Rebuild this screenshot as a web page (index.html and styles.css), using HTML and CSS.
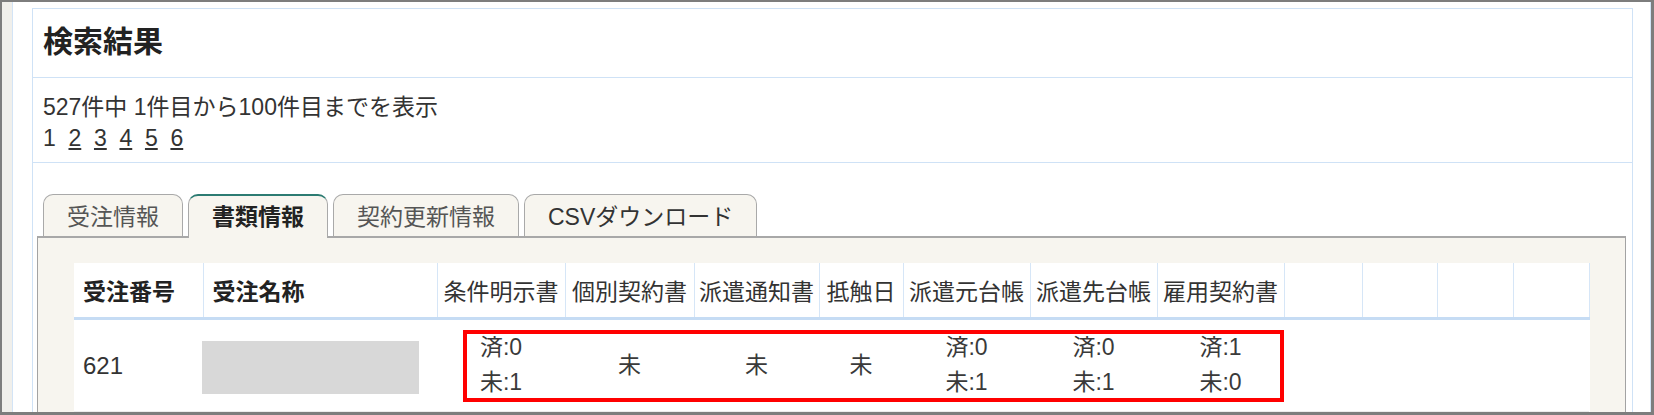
FILE: index.html
```html
<!DOCTYPE html>
<html lang="ja">
<head>
<meta charset="utf-8">
<title>検索結果</title>
<link rel="stylesheet" href="styles.css">
</head>
<body>
<div class="frame">
  <div class="side"></div>
  <div class="main">
    <div class="panel">
      <div class="panel-head">
        <h2 class="title">検索結果</h2>
      </div>
      <div class="summary">
        <div class="summary-line">527件中 1件目から100件目までを表示</div>
        <div class="pager">
          <span class="page current">1</span>
          <a class="page" href="#">2</a>
          <a class="page" href="#">3</a>
          <a class="page" href="#">4</a>
          <a class="page" href="#">5</a>
          <a class="page" href="#">6</a>
        </div>
      </div>
      <div class="tabs-wrap">
        <div class="tabs">
          <div class="tab">受注情報</div>
          <div class="tab active">書類情報</div>
          <div class="tab">契約更新情報</div>
          <div class="tab">CSVダウンロード</div>
        </div>
        <div class="tab-panel">
          <div class="table-wrap">
            <table class="grid">
              <colgroup>
                <col style="width:129px">
                <col style="width:234px">
                <col style="width:128px">
                <col style="width:129px">
                <col style="width:125px">
                <col style="width:84px">
                <col style="width:127px">
                <col style="width:127px">
                <col style="width:127px">
                <col style="width:78px">
                <col style="width:75px">
                <col style="width:76px">
                <col style="width:76px">
              </colgroup>
              <thead>
                <tr>
                  <th class="h-left h-bold">受注番号</th>
                  <th class="h-left h-bold">受注名称</th>
                  <th>条件明示書</th>
                  <th>個別契約書</th>
                  <th>派遣通知書</th>
                  <th>抵触日</th>
                  <th>派遣元台帳</th>
                  <th>派遣先台帳</th>
                  <th>雇用契約書</th>
                  <th></th>
                  <th></th>
                  <th></th>
                  <th></th>
                </tr>
              </thead>
              <tbody>
                <tr>
                  <td class="c-left">621</td>
                  <td class="c-name"><div class="masked"></div></td>
                  <td>済:0<br>未:1</td>
                  <td>未</td>
                  <td>未</td>
                  <td>未</td>
                  <td>済:0<br>未:1</td>
                  <td>済:0<br>未:1</td>
                  <td>済:1<br>未:0</td>
                  <td></td>
                  <td></td>
                  <td></td>
                  <td></td>
                </tr>
              </tbody>
            </table>
            <div class="highlight"></div>
          </div>
        </div>
      </div>
    </div>
  </div>
</div>
</body>
</html>
```

FILE: styles.css
```css
* { box-sizing: border-box; }

html, body {
  margin: 0;
  padding: 0;
  background: #ffffff;
}

body {
  font-family: "Liberation Sans", "Noto Sans CJK JP", sans-serif;
  font-size: 23px;
  color: #333333;
}

.frame {
  width: 1654px;
  height: 415px;
  display: flex;
  border-top: 2px solid #7d7d7d;
  border-left: 2px solid #7d7d7d;
  border-right: 3px solid #7d7d7d;
  border-bottom: 3px solid #7d7d7d;
  overflow: hidden;
}

.side {
  width: 11px;
  flex: 0 0 11px;
  background: #f0efeb;
  border-right: 1px solid #d3e4f6;
}

.main {
  flex: 1;
  padding: 6px 17px 0 19px;
  border-right: 1px solid #d3e4f6;
  background: #ffffff;
}

.panel {
  height: 100%;
  border: 1px solid #cfe2f6;
  border-bottom: none;
}

.panel-head {
  padding: 13px 10px 15px;
  border-bottom: 1px solid #cfe2f6;
}

.title {
  margin: 0;
  font-size: 30px;
  line-height: 40px;
  font-weight: bold;
  color: #222222;
}

.summary {
  padding: 14px 10px 8px;
  border-bottom: 1px solid #cfe2f6;
  line-height: 31px;
}

.pager {
  display: flex;
  gap: 12.7px;
}

.page {
  color: #333333;
  text-decoration: underline;
}

.page.current {
  text-decoration: none;
}

.tabs-wrap {
  padding: 31px 6px 0 4px;
}

.tabs {
  display: flex;
  align-items: flex-end;
  gap: 5px;
  padding-left: 6px;
  margin-bottom: -2px;
  position: relative;
  z-index: 1;
}

.tab {
  height: 42px;
  margin-bottom: 2px;
  padding: 0 23px 2px;
  display: flex;
  align-items: center;
  background: #f7f5ef;
  border: 1px solid #a9a9a9;
  border-bottom: none;
  border-radius: 10px 10px 0 0;
  color: #555555;
  white-space: nowrap;
}

.tab.active {
  height: 44px;
  margin-bottom: 0;
  padding-bottom: 4px;
  border-top: 2px solid #2c7b72;
  font-weight: bold;
  color: #222222;
}

.tabs .tab:last-child {
  color: #333333;
}

.tab-panel {
  background: #f7f5ef;
  border: 1px solid #a3a3a3;
  border-top: 2px solid #a8a8a8;
  padding: 25px 35px 0 36px;
  height: 300px;
}

.table-wrap {
  position: relative;
}

.grid {
  width: 1515px;
  border-collapse: collapse;
  table-layout: fixed;
  background: #ffffff;
}

.grid th {
  height: 55px;
  padding: 0;
  text-align: center;
  font-weight: normal;
  color: #333333;
  border-right: 1px solid #d6e6f7;
  border-bottom: 3px solid #c6dcf4;
  white-space: nowrap;
}

.grid th.h-left {
  text-align: left;
  padding-left: 9px;
}

.grid th.h-bold {
  font-weight: bold;
  color: #222222;
}

.grid td {
  height: 93px;
  padding: 0;
  text-align: center;
  vertical-align: middle;
  line-height: 35px;
  color: #3a3a3a;
  border-bottom: 1px solid #ececec;
}

.grid td.c-left {
  text-align: left;
  padding-left: 9px;
  font-size: 24px;
  color: #333333;
}

.grid td.c-name {
  text-align: left;
  padding-top: 5px;
}

.masked {
  width: 217px;
  height: 53px;
  margin-left: -1px;
  background: #d8d8d8;
}

.highlight {
  position: absolute;
  left: 389px;
  top: 67px;
  width: 821px;
  height: 72px;
  border: 4px solid #ff0000;
  pointer-events: none;
}
```
